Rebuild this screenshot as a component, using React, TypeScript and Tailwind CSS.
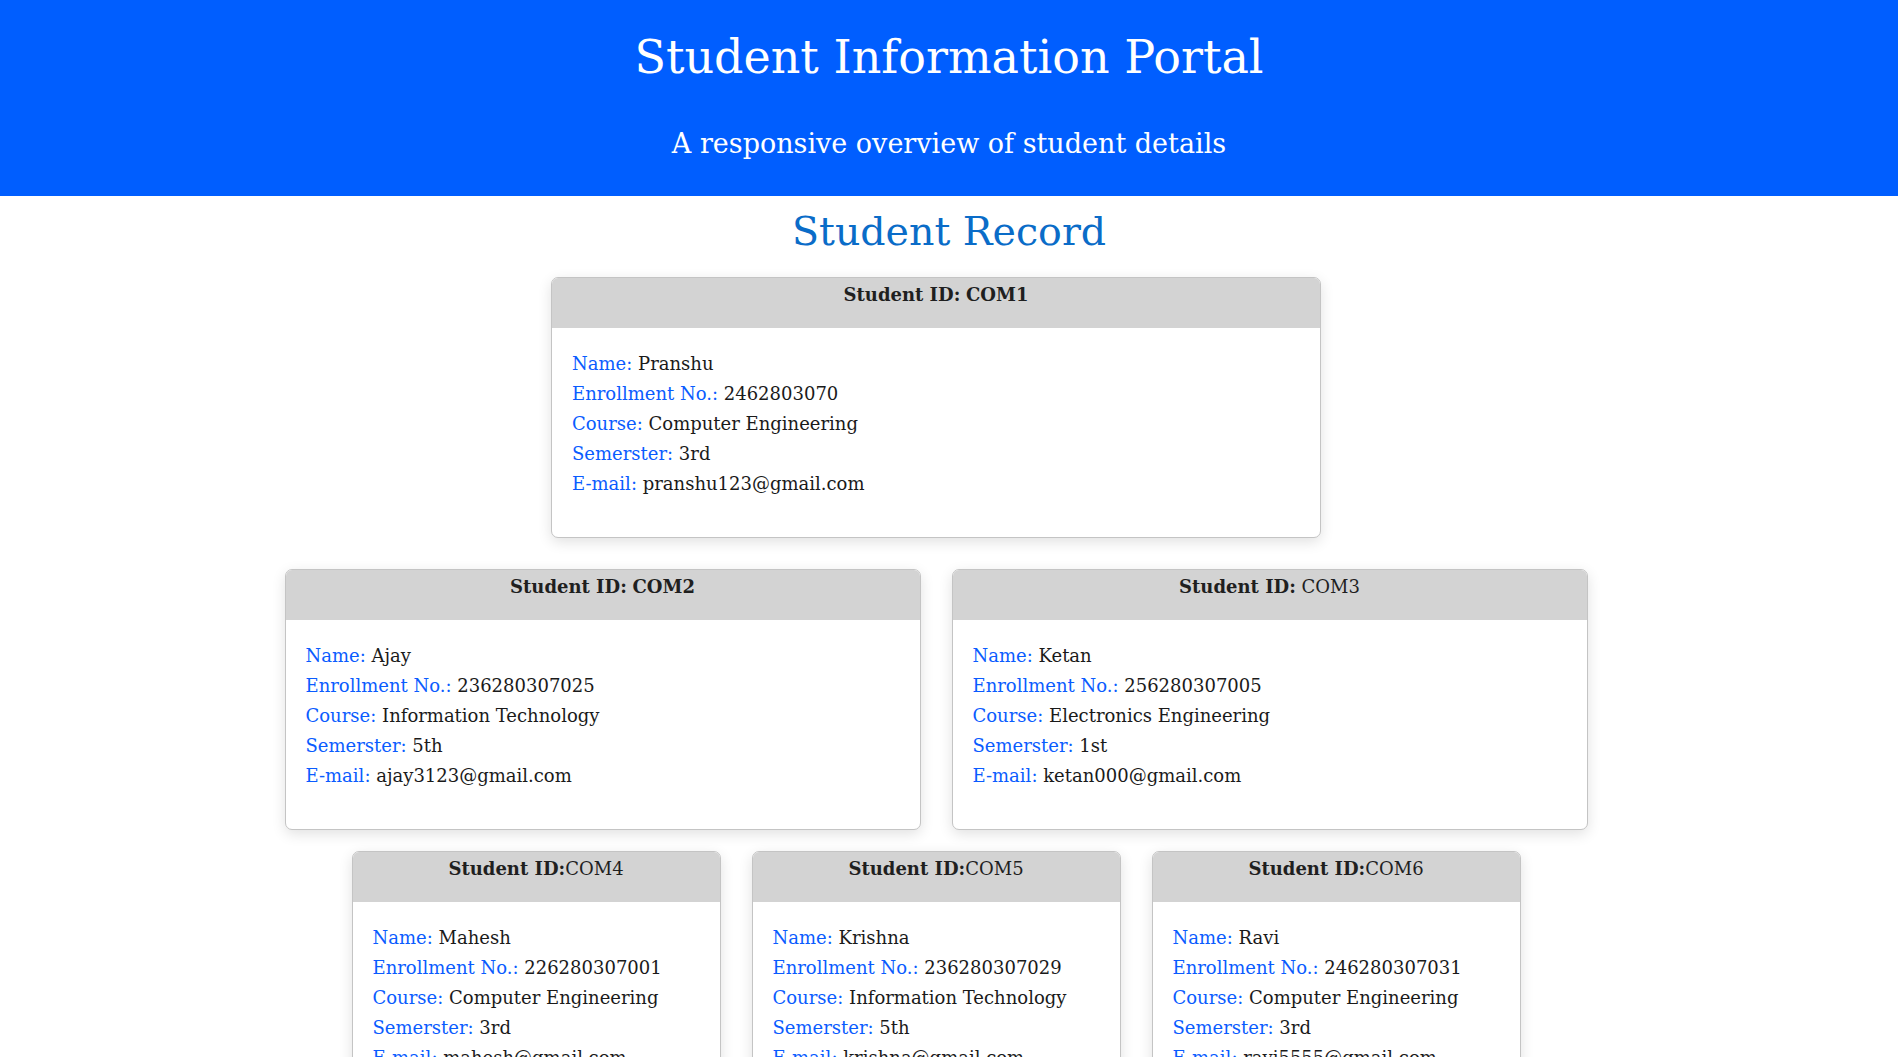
import React from "react";

type Student = {
  id: string;
  idBold: boolean;
  space: boolean;
  name: string;
  enroll: string;
  course: string;
  sem: string;
  email: string;
};

const students: Student[] = [
  { id: "COM1", idBold: true, space: true, name: "Pranshu", enroll: "2462803070", course: "Computer Engineering", sem: "3rd", email: "pranshu123@gmail.com" },
  { id: "COM2", idBold: true, space: true, name: "Ajay", enroll: "236280307025", course: "Information Technology", sem: "5th", email: "ajay3123@gmail.com" },
  { id: "COM3", idBold: false, space: true, name: "Ketan", enroll: "256280307005", course: "Electronics Engineering", sem: "1st", email: "ketan000@gmail.com" },
  { id: "COM4", idBold: false, space: false, name: "Mahesh", enroll: "226280307001", course: "Computer Engineering", sem: "3rd", email: "mahesh@gmail.com" },
  { id: "COM5", idBold: false, space: false, name: "Krishna", enroll: "236280307029", course: "Information Technology", sem: "5th", email: "krishna@gmail.com" },
  { id: "COM6", idBold: false, space: false, name: "Ravi", enroll: "246280307031", course: "Computer Engineering", sem: "3rd", email: "ravi5555@gmail.com" },
];

function Row({ label, value }: { label: string; value: string }) {
  return (
    <p className="h-[30px] leading-[30px] whitespace-nowrap">
      <span className="text-[#0a5cff]">{label}:</span> <span className="text-[#1a1a1a]">{value}</span>
    </p>
  );
}

function Card({ s, width }: { s: Student; width: string }) {
  return (
    <div className={`${width} shrink-0 rounded-[7px] border border-[#c4c4c4] bg-white shadow-[0_4px_14px_rgba(0,0,0,0.12)] overflow-hidden`}>
      <div className="h-[50px] bg-[#d3d3d3] pt-[4px] text-center text-[18px] leading-[26px] text-[#1f1f1f]">
        <span className="font-bold">Student ID:</span>
        {s.space ? " " : ""}
        <span className={s.idBold ? "font-bold" : ""}>{s.id}</span>
      </div>
      <div className="px-[20px] pt-[21px] pb-[38px] text-[18px]">
        <Row label="Name" value={s.name} />
        <Row label="Enrollment No." value={s.enroll} />
        <Row label="Course" value={s.course} />
        <Row label="Semerster" value={s.sem} />
        <Row label="E-mail" value={s.email} />
      </div>
    </div>
  );
}

export default function App() {
  return (
    <div className="min-h-screen bg-white font-['DejaVu_Serif',serif]">
      <header className="h-[196px] bg-[#005eff] text-center text-white flex flex-col items-center">
        <h1 className="mt-[27px] text-[46px] leading-[60px]">Student Information Portal</h1>
        <p className="mt-[39px] text-[27px] leading-[36px]">A responsive overview of student details</p>
      </header>
      <h2 className="mt-[13px] text-center text-[39.5px] leading-[44px] text-[#0a6cc8]">Student Record</h2>
      <div className="mt-[24px] flex flex-col items-center pr-[26px]">
        <Card s={students[0]} width="w-[770px]" />
        <div className="mt-[31px] flex gap-[31px]">
          <Card s={students[1]} width="w-[636px]" />
          <Card s={students[2]} width="w-[636px]" />
        </div>
        <div className="mt-[21px] flex gap-[31px] pb-[30px]">
          <Card s={students[3]} width="w-[369px]" />
          <Card s={students[4]} width="w-[369px]" />
          <Card s={students[5]} width="w-[369px]" />
        </div>
      </div>
    </div>
  );
}
